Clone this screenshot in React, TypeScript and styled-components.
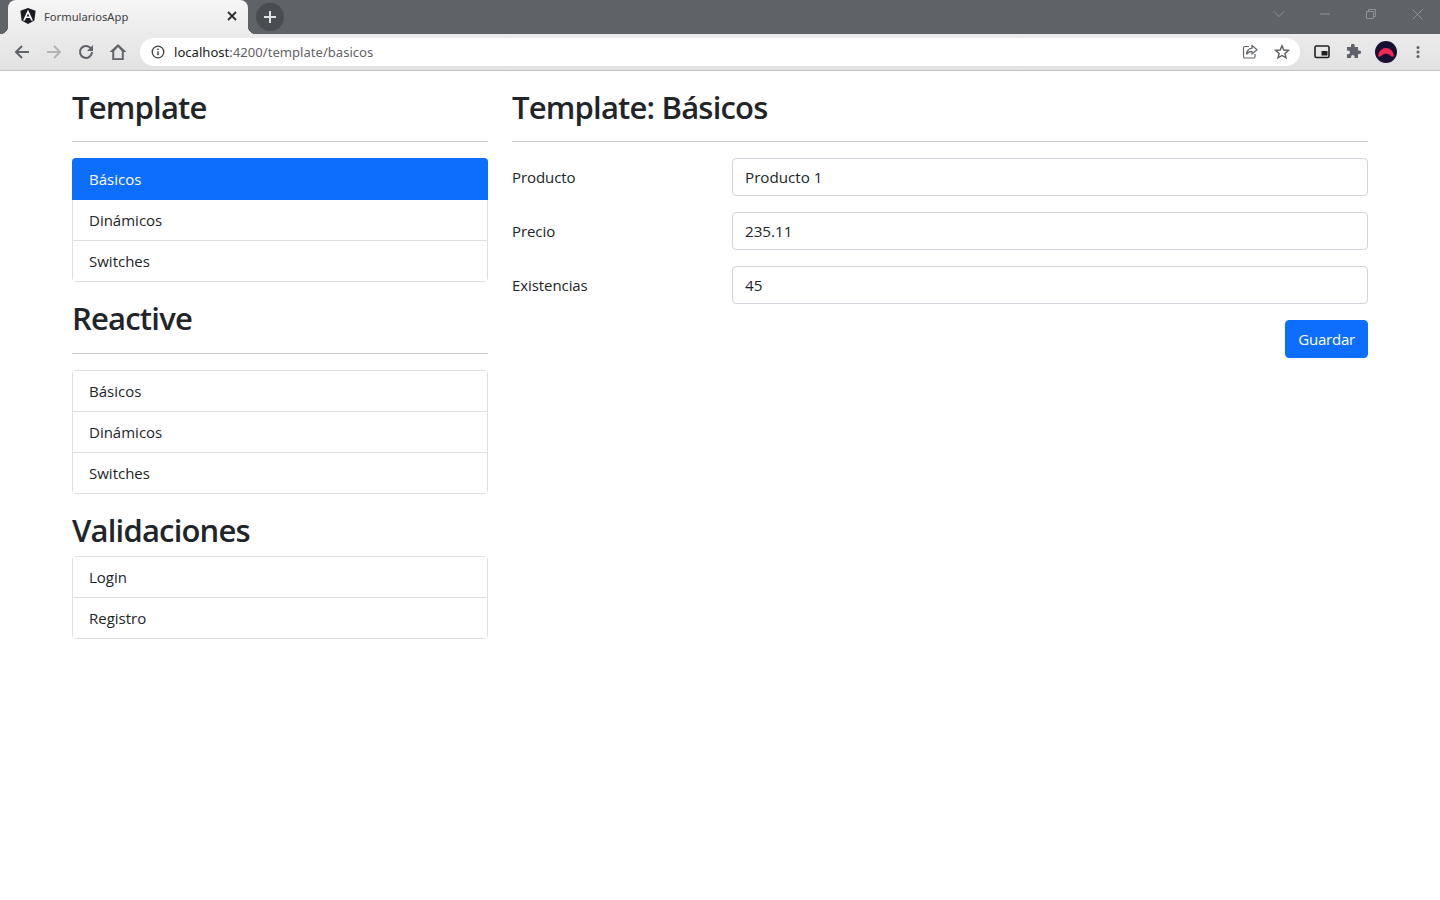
import React from "react";
import styled, { createGlobalStyle } from "styled-components";

const Global = createGlobalStyle`
  html, body { margin: 0; padding: 0; background: #fff; }
  body { font-family: "Open Sans", "Noto Sans", sans-serif; color: #212529; font-size: 15px; line-height: 1.5; width: 1440px; height: 900px; overflow: hidden; }
  * { box-sizing: border-box; }
`;

const Chrome = styled.header`
  height: 71px;
  display: flex;
  flex-direction: column;
`;
const TabStrip = styled.div`
  height: 34px;
  background: #5f6368;
  display: flex;
  align-items: flex-end;
  padding-left: 8px;
`;
const Tab = styled.div`
  position: relative;
  width: 240px;
  height: 34px;
  background: linear-gradient(#f6f6f6, #ebebeb);
  border-radius: 8px 8px 0 0;
  display: flex;
  align-items: center;
  padding: 0 10px 2px 12px;
  &::before, &::after {
    content: "";
    position: absolute;
    bottom: 0;
    width: 8px;
    height: 8px;
  }
  &::before { left: -8px; background: radial-gradient(circle at 0 0, #5f6368 8px, #ebebeb 8.5px); }
  &::after { right: -8px; background: radial-gradient(circle at 100% 0, #5f6368 8px, #ebebeb 8.5px); }
`;
const TabTitle = styled.span`
  flex: 1;
  margin-left: 8px;
  font: 11.2px "Noto Sans", "Open Sans", sans-serif;
  color: #3c4043;
`;
const NewTab = styled.div`
  width: 28px;
  height: 28px;
  margin: 0 0 3px 8px;
  border-radius: 50%;
  background: #494c50;
  display: flex;
  align-items: center;
  justify-content: center;
`;
const WindowControls = styled.div`
  margin-left: auto;
  align-self: flex-start;
  display: flex;
  align-items: center;
  height: 28px;
`;
const WindowButton = styled.div`
  width: 46px;
  display: flex;
  justify-content: center;
`;
const Toolbar = styled.div`
  height: 37px;
  background: linear-gradient(#ebebeb, #e2e2e2);
  border-bottom: 1px solid #c4c4c4;
  display: flex;
  align-items: center;
  padding-left: 6px;
`;
const NavButton = styled.div`
  width: 32px;
  height: 32px;
  display: flex;
  align-items: center;
  justify-content: center;
`;
const ExtensionIcon = styled.svg`
  margin-left: -2px;
`;
const Omnibox = styled.div`
  width: 1160px;
  height: 28px;
  margin-left: 6px;
  background: #fff;
  border-radius: 14px;
  display: flex;
  align-items: center;
  padding: 0 2px 0 11px;
`;
const Url = styled.span`
  flex: 1;
  margin-left: 9px;
  font: 13.1px "Noto Sans", "Open Sans", sans-serif;
  color: #5f6368;
  b { font-weight: 400; color: #202124; }
`;
const Actions = styled.div`
  display: flex;
  margin-left: 6px;
`;

const Container = styled.main`
  width: 1320px;
  margin: 16px auto 0;
  padding: 0 12px;
  display: grid;
  grid-template-columns: 416px 856px;
  column-gap: 24px;
`;
const Column = styled.section``;
const Title = styled.h2<{ $tight?: boolean }>`
  margin: 0 0 ${(p) => (p.$tight ? 8 : 16)}px;
  padding-top: 1px;
  height: 38.4px;
  font-size: 31px;
  font-weight: 600;
  line-height: 38.4px;
  letter-spacing: -0.8px;
  color: #212529;
`;
const Rule = styled.hr`
  margin: 0 0 16px;
  border: 0;
  border-top: 1px solid #c6c7c8;
`;
const List = styled.ul`
  list-style: none;
  margin: 0 0 16px;
  padding: 0;
  border: 1px solid #dfdfdf;
  border-radius: 4px;
`;
const Item = styled.li<{ $active?: boolean }>`
  height: ${(p) => (p.$active ? 42 : 40)}px;
  padding: ${(p) => (p.$active ? "9px 17px 9px" : "8px 16px")};
  font-size: 15px;
  line-height: 24px;
  background: ${(p) => (p.$active ? "#0d6efd" : "#fff")};
  color: ${(p) => (p.$active ? "#fff" : "#212529")};
  margin: ${(p) => (p.$active ? "-1px -1px 0" : "0")};
  border-radius: ${(p) => (p.$active ? "4px 4px 0 0" : "0")};
  & + & { height: 41px; border-top: 1px solid #dfdfdf; }
`;
const AfterActive = styled(Item)`
  && { height: 40px; border-top: 0; }
`;
const Form = styled.form`
  display: flex;
  flex-direction: column;
  gap: 16px;
`;
const Row = styled.div`
  display: grid;
  grid-template-columns: 220px 1fr;
  align-items: start;
`;
const Label = styled.label`
  padding-top: 7px;
  font-size: 15px;
  line-height: 24px;
  letter-spacing: -0.08px;
`;
const Input = styled.input`
  width: 100%;
  height: 38px;
  padding: 6px 12px;
  border: 1px solid #ced4da;
  border-radius: 4px;
  font: 15.2px/24px "Open Sans", "Noto Sans", sans-serif;
  color: #212529;
  background: #fff;
  outline: none;
`;
const Footer = styled.div`
  display: flex;
  justify-content: flex-end;
`;
const Button = styled.button`
  height: 38px;
  padding: 6px 12px;
  border: 1px solid #0d6efd;
  border-radius: 4px;
  background: #0d6efd;
  color: #fff;
  font: 15px/24px "Open Sans", "Noto Sans", sans-serif;
  letter-spacing: -0.2px;
`;

const stroke = "#5f6368";

export default function App() {
  return (
    <>
      <Global />
      <Chrome>
        <TabStrip>
          <Tab>
            <svg width="16" height="16" viewBox="0 0 16 16">
              <path d="M8 0 .4 2.7l1.2 9.9L8 16l6.4-3.4 1.2-9.9z" fill="#1a1a20" />
              <path d="M8 1.8 3 12.6h1.9l1-2.5h4.2l1 2.5H13zM8 5.6l1.4 3H6.6z" fill="#fff" fillRule="evenodd" />
            </svg>
            <TabTitle>FormulariosApp</TabTitle>
            <svg width="12" height="12" viewBox="0 0 12 12">
              <path d="M2 2l8 8M10 2l-8 8" stroke="#2a2c2f" strokeWidth="1.8" />
            </svg>
          </Tab>
          <NewTab>
            <svg width="14" height="14" viewBox="0 0 14 14">
              <path d="M7 1v12M1 7h12" stroke="#dfe1e5" strokeWidth="2" />
            </svg>
          </NewTab>
          <WindowControls>
            <WindowButton>
              <svg width="12" height="8" viewBox="0 0 12 8"><path d="M1 1.5l5 5 5-5" fill="none" stroke="#8f9296" /></svg>
            </WindowButton>
            <WindowButton>
              <svg width="10" height="2" viewBox="0 0 10 2"><path d="M0 1h10" stroke="#8f9296" /></svg>
            </WindowButton>
            <WindowButton>
              <svg width="10" height="10" viewBox="0 0 10 10"><path d="M.5 2.5h7v7h-7zM2.5 2.5v-2h7v7h-2" fill="none" stroke="#8f9296" /></svg>
            </WindowButton>
            <WindowButton>
              <svg width="11" height="11" viewBox="0 0 11 11"><path d="M.5.5l10 10M10.5.5l-10 10" stroke="#8f9296" /></svg>
            </WindowButton>
          </WindowControls>
        </TabStrip>
        <Toolbar>
          <NavButton>
            <svg width="16" height="16" viewBox="0 0 16 16"><path d="M15 8H2.5M8 2 2 8l6 6" fill="none" stroke={stroke} strokeWidth="2" /></svg>
          </NavButton>
          <NavButton>
            <svg width="16" height="16" viewBox="0 0 16 16"><path d="M1 8h12.5M8 2l6 6-6 6" fill="none" stroke="#b0b2b4" strokeWidth="2" /></svg>
          </NavButton>
          <NavButton>
            <svg width="16" height="16" viewBox="0 0 16 16"><path d="M13.2 4.9A6 6 0 1 0 14 8" fill="none" stroke={stroke} strokeWidth="2" /><path d="M15 1v6H9z" fill={stroke} /></svg>
          </NavButton>
          <NavButton>
            <svg width="18" height="18" viewBox="0 0 16 16"><path d="M8 .8.5 8h2.4v7.2h10.200V8h2.400zM4.600 13.600V7.300L8 3.600l3.400 3.700v6.300z" fill={stroke} fillRule="evenodd" /></svg>
          </NavButton>
          <Omnibox>
            <svg width="14" height="14" viewBox="0 0 14 14">
              <circle cx="7" cy="7" r="5.8" fill="none" stroke="#3c4043" strokeWidth="1.3" />
              <path d="M7 6.2v4M7 3.6v1.5" stroke="#3c4043" strokeWidth="1.4" />
            </svg>
            <Url><b>localhost</b>:4200/template/basicos</Url>
            <NavButton>
              <svg width="16" height="16" viewBox="0 0 16 16">
                <path d="M7 2.5H3A1.500 1.500 0 0 0 1.500 4v8.500A1.500 1.500 0 0 0 3 14h8.500a1.500 1.500 0 0 0 1.500-1.500V10" fill="none" stroke={stroke} strokeWidth="1.2" />
                <path d="M10 1.500l5 4.200-5 4.200V7.400C7.500 7.300 5.800 8.300 4.500 10.300c.3-3.500 2.400-5.800 5.500-6.200z" fill="none" stroke={stroke} strokeWidth="1.2" />
              </svg>
            </NavButton>
            <NavButton>
              <svg width="16" height="16" viewBox="0 0 16 16">
                <path d="M8 1.800l1.800 4.200 4.600.4-3.500 3 1.100 4.500L8 11.500l-4 2.400 1.100-4.500-3.500-3 4.600-.4z" fill="none" stroke="#5a5d60" strokeWidth="1.4" />
              </svg>
            </NavButton>
          </Omnibox>
          <Actions>
            <NavButton>
              <svg width="16" height="14" viewBox="0 0 16 14">
                <rect x="1" y="1" width="14" height="11.5" rx="1.5" fill="none" stroke="#1f2124" strokeWidth="1.6" />
                <rect x="7.5" y="6" width="6" height="4.5" fill="#1f2124" />
              </svg>
            </NavButton>
            <NavButton>
              <ExtensionIcon width="16" height="16" viewBox="0 0 16 16">
                <path d="M6 1.500a1.800 1.800 0 0 1 3.600 0V3H13v3.500h1.300a1.800 1.800 0 0 1 0 3.600H13V14H9.500v-1.200a1.700 1.700 0 0 0-3.400 0V14H2v-3.800h1.200a1.800 1.800 0 0 0 0-3.600H2V3h4z" fill={stroke} />
              </ExtensionIcon>
            </NavButton>
            <NavButton>
              <svg width="22" height="22" viewBox="0 0 22 22">
                <circle cx="11" cy="11" r="11" fill="#1a1033" />
                <path d="M3 15.500A8 8.500 0 0 1 19 15.500h-2.500L14 13.500l-3-1-3 1-2.500 2z" fill="#ee2a55" />
              </svg>
            </NavButton>
            <NavButton>
              <svg width="4" height="14" viewBox="0 0 4 14">
                <circle cx="2" cy="2.5" r="1.5" fill={stroke} />
                <circle cx="2" cy="7" r="1.5" fill={stroke} />
                <circle cx="2" cy="11.5" r="1.5" fill={stroke} />
              </svg>
            </NavButton>
          </Actions>
        </Toolbar>
      </Chrome>
      <Container>
        <Column>
          <Title>Template</Title>
          <Rule />
          <List>
            <Item $active>Básicos</Item>
            <AfterActive>Dinámicos</AfterActive>
            <Item>Switches</Item>
          </List>
          <Title>Reactive</Title>
          <Rule />
          <List>
            <Item>Básicos</Item>
            <Item>Dinámicos</Item>
            <Item>Switches</Item>
          </List>
          <Title $tight>Validaciones</Title>
          <List>
            <Item>Login</Item>
            <Item>Registro</Item>
          </List>
        </Column>
        <Column>
          <Title>Template: Básicos</Title>
          <Rule />
          <Form>
            <Row>
              <Label>Producto</Label>
              <Input defaultValue="Producto 1" />
            </Row>
            <Row>
              <Label>Precio</Label>
              <Input defaultValue="235.11" />
            </Row>
            <Row>
              <Label>Existencias</Label>
              <Input defaultValue="45" />
            </Row>
            <Footer>
              <Button type="button">Guardar</Button>
            </Footer>
          </Form>
        </Column>
      </Container>
    </>
  );
}
